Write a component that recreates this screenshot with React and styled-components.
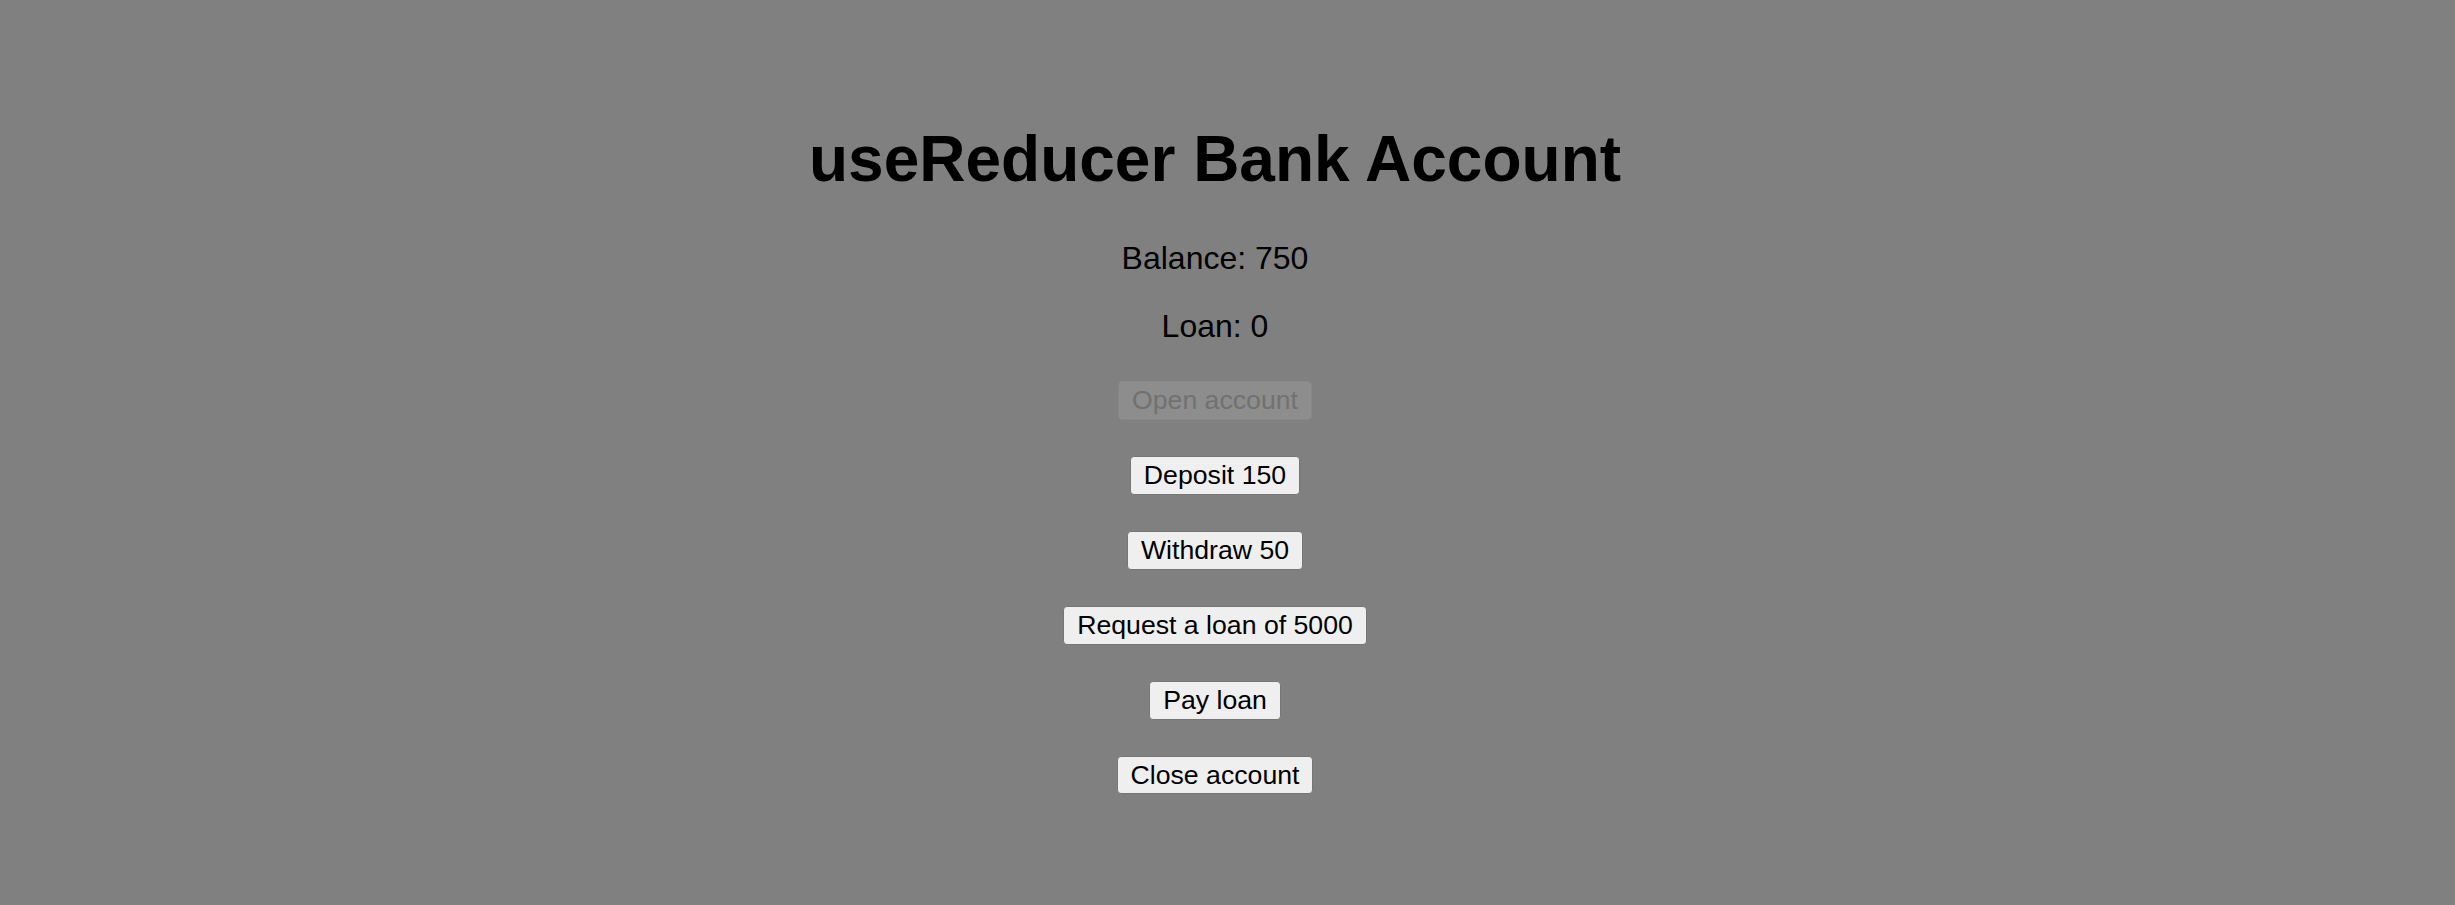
import React, { useReducer } from 'react';
import styled, { createGlobalStyle } from 'styled-components';

const GlobalStyle = createGlobalStyle`
  html, body {
    margin: 0;
    background: #808080;
  }
  body {
    font-family: "Liberation Sans", Arial, Helvetica, sans-serif;
    color: #000;
  }
`;

const initialState = {
  balance: 750,
  loan: 0,
  isActive: true,
};

function reducer(state, action) {
  switch (action.type) {
    case 'openAccount':
      return { ...state, balance: 500, isActive: true };
    case 'deposit':
      return { ...state, balance: state.balance + action.payload };
    case 'withdraw':
      return { ...state, balance: state.balance - action.payload };
    case 'requestLoan':
      if (state.loan > 0) return state;
      return { ...state, loan: action.payload, balance: state.balance + action.payload };
    case 'payLoan':
      return { ...state, loan: 0, balance: state.balance - state.loan };
    case 'closeAccount':
      if (state.loan > 0 || state.balance !== 0) return state;
      return initialState;
    default:
      return state;
  }
}

export default function App() {
  const [{ balance, loan, isActive }, dispatch] = useReducer(reducer, initialState);

  return (
    <>
      <GlobalStyle />
      <AppWrapper>
        <Title>useReducer Bank Account</Title>
        <Line>Balance: {balance}</Line>
        <Line>Loan: {loan}</Line>

        <ButtonRow>
          <Button onClick={() => dispatch({ type: 'openAccount' })} disabled={isActive}>
            Open account
          </Button>
        </ButtonRow>
        <ButtonRow>
          <Button onClick={() => dispatch({ type: 'deposit', payload: 150 })} disabled={!isActive}>
            Deposit 150
          </Button>
        </ButtonRow>
        <ButtonRow>
          <Button onClick={() => dispatch({ type: 'withdraw', payload: 50 })} disabled={!isActive}>
            Withdraw 50
          </Button>
        </ButtonRow>
        <ButtonRow>
          <Button onClick={() => dispatch({ type: 'requestLoan', payload: 5000 })} disabled={!isActive}>
            Request a loan of 5000
          </Button>
        </ButtonRow>
        <ButtonRow>
          <Button onClick={() => dispatch({ type: 'payLoan' })} disabled={!isActive}>
            Pay loan
          </Button>
        </ButtonRow>
        <ButtonRow>
          <Button onClick={() => dispatch({ type: 'closeAccount' })} disabled={!isActive}>
            Close account
          </Button>
        </ButtonRow>
      </AppWrapper>
    </>
  );
}

const AppWrapper = styled.div`
  text-align: center;
  padding: 80px 25px 0 0;
`;

const Title = styled.h1`
  font-size: 64px;
  font-weight: 700;
  line-height: 1.15;
  margin: 43px 0;
`;

const Line = styled.p`
  font-size: 32px;
  line-height: 1.15;
  margin: 32px 0;
`;

const ButtonRow = styled(Line)`
  margin: 35px 0;
`;

const Button = styled.button`
  font-family: "Liberation Sans", Arial, Helvetica, sans-serif;
  font-size: 26.67px;
  line-height: 1.15;
  color: #000;
  background: #efefef;
  border: 1px solid #767676;
  border-radius: 4px;
  padding: 3px 13px;
  vertical-align: middle;
  cursor: pointer;

  &:disabled {
    color: #717171;
    background: #8d8d8d;
    border-color: #888888;
    cursor: default;
  }
`;
